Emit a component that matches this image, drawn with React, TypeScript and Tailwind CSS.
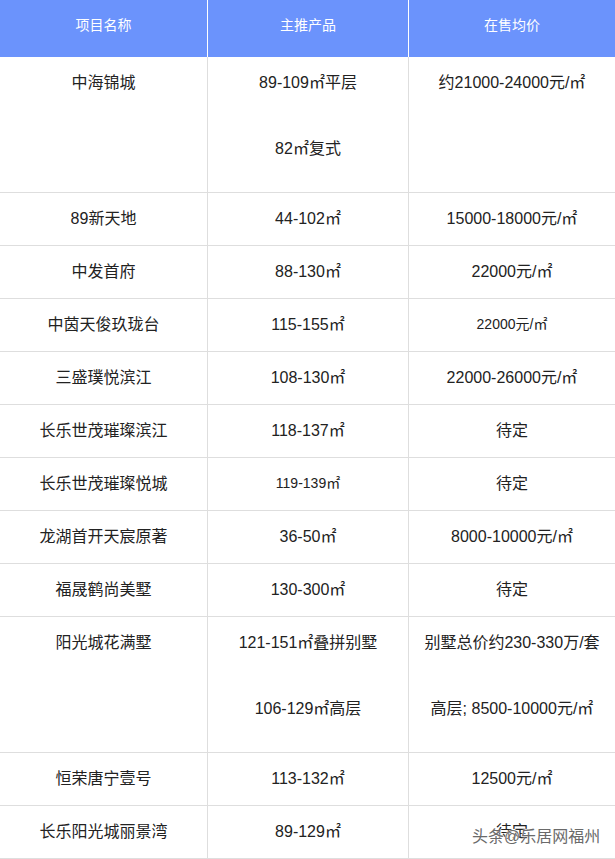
type Cell = string | string[];

type Row = {
  name: string;
  product: Cell;
  price: Cell;
  smallProduct?: boolean;
  smallPrice?: boolean;
};

const rows: Row[] = [
  { name: "中海锦城", product: ["89-109㎡平层", "82㎡复式"], price: "约21000-24000元/㎡" },
  { name: "89新天地", product: "44-102㎡", price: "15000-18000元/㎡" },
  { name: "中发首府", product: "88-130㎡", price: "22000元/㎡" },
  { name: "中茵天俊玖珑台", product: "115-155㎡", price: "22000元/㎡", smallPrice: true },
  { name: "三盛璞悦滨江", product: "108-130㎡", price: "22000-26000元/㎡" },
  { name: "长乐世茂璀璨滨江", product: "118-137㎡", price: "待定" },
  { name: "长乐世茂璀璨悦城", product: "119-139㎡", price: "待定", smallProduct: true },
  { name: "龙湖首开天宸原著", product: "36-50㎡", price: "8000-10000元/㎡" },
  { name: "福晟鹤尚美墅", product: "130-300㎡", price: "待定" },
  {
    name: "阳光城花满墅",
    product: ["121-151㎡叠拼别墅", "106-129㎡高层"],
    price: ["别墅总价约230-330万/套", "高层; 8500-10000元/㎡"],
  },
  { name: "恒荣唐宁壹号", product: "113-132㎡", price: "12500元/㎡" },
  { name: "长乐阳光城丽景湾", product: "89-129㎡", price: "待定" },
];

function CellText({ value, small }: { value: Cell; small?: boolean }) {
  const size = small ? "text-[14px]" : "text-[16px]";
  if (Array.isArray(value)) {
    return (
      <div className={`flex flex-col gap-[43px] pb-[17px] ${size}`}>
        {value.map((line) => (
          <p key={line} className="whitespace-nowrap">
            {line}
          </p>
        ))}
      </div>
    );
  }
  return <p className={`whitespace-nowrap ${size}`}>{value}</p>;
}

export default function App() {
  return (
    <div
      className="relative w-[615px] bg-white text-[#222]"
      style={{ fontFamily: '"Liberation Sans", "Noto Sans CJK SC", sans-serif' }}
    >
      <div className="grid h-[57px] grid-cols-[208px_201px_1fr] bg-[#6b93fc] text-[14px] leading-[20px] text-white">
        <div className="border-r border-white pt-[15px] text-center">项目名称</div>
        <div className="border-r border-white pt-[15px] text-center">主推产品</div>
        <div className="pt-[15px] text-center">在售均价</div>
      </div>

      {rows.map((r) => (
        <div
          key={r.name}
          className="grid grid-cols-[208px_201px_1fr] border-b border-[#dedede] leading-[23px]"
        >
          <div className="border-r border-[#dedede] pt-[14px] pb-[15px] text-center">
            <CellText value={r.name} />
          </div>
          <div className="flex justify-center border-r border-[#dedede] pt-[14px] pb-[15px] text-center">
            <CellText value={r.product} small={r.smallProduct} />
          </div>
          <div className="flex justify-center pt-[14px] pb-[15px] text-center">
            <CellText value={r.price} small={r.smallPrice} />
          </div>
        </div>
      ))}

      <div className="h-[2px]" />

      {/* watermark */}
      <div className="absolute left-[472px] top-[827px] text-[16px] leading-[20px] text-[#6a6a6a] [text-shadow:0_0_2px_#fff,0_0_1px_#fff]">
        头条@乐居网福州
      </div>
    </div>
  );
}
